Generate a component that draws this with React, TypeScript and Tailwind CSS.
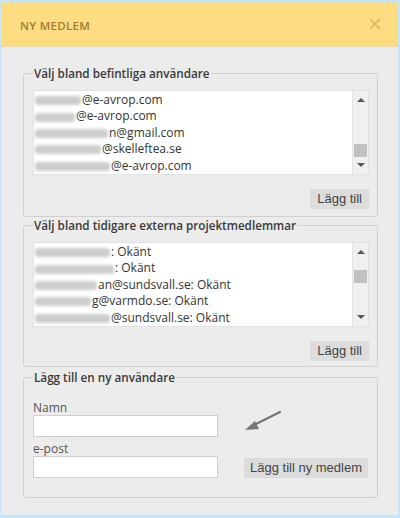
import React from "react";

const font = { fontFamily: '"Open Sans", "Noto Sans", sans-serif' };
const arial = { fontFamily: '"Liberation Sans", Arial, sans-serif' };

function Blur({ w }: { w: number }) {
  return (
    <span
      aria-hidden="true"
      className="inline-block h-[9px] mr-[1px] align-middle rounded-[3px] bg-[#cdcdcd] blur-[1.8px]"
      style={{ width: w }}
    />
  );
}

function Scrollbar({ thumbTop }: { thumbTop: number }) {
  return (
    <div className="relative w-[16px] shrink-0 bg-[#f0f0f0] border-l border-[#e4e4e4]">
      <div className="absolute left-[4px] top-[7px] w-0 h-0 border-l-[4px] border-r-[4px] border-b-[4px] border-l-transparent border-r-transparent border-b-[#555]" />
      <div
        className="absolute left-[1px] w-[13px] h-[13px] bg-[#c1c1c1]"
        style={{ top: thumbTop }}
      />
      <div className="absolute left-[4px] bottom-[7px] w-0 h-0 border-l-[4px] border-r-[4px] border-t-[4px] border-l-transparent border-r-transparent border-t-[#555]" />
    </div>
  );
}

function ListBox({
  items,
  thumbTop,
}: {
  items: { w: number; rest: string }[];
  thumbTop: number;
}) {
  return (
    <div className="flex h-[85px] bg-white border border-[#e2e2e2]">
      <div className="flex-1 pl-[1px] pt-[1px] overflow-hidden">
        {items.map((it, i) => (
          <div
            key={i}
            className="h-[16.4px] leading-[16.4px] text-[12px] text-[#333] whitespace-nowrap"
            style={font}
          >
            <Blur w={it.w} />
            {it.rest}
          </div>
        ))}
      </div>
      <Scrollbar thumbTop={thumbTop} />
    </div>
  );
}

function Btn({ children, px }: { children: React.ReactNode; px: string }) {
  return (
    <button
      className={"h-[20px] bg-[#dcdcdc] text-[13px] text-[#444] leading-[20px] " + px}
      style={arial}
    >
      {children}
    </button>
  );
}

function Fieldset({
  legend,
  children,
  className,
}: {
  legend: string;
  children: React.ReactNode;
  className?: string;
}) {
  return (
    <fieldset
      className={
        "border border-[#d0d0d0] rounded-[3px] pl-[9px] pr-[8px] " +
        (className || "")
      }
    >
      <legend
        className="px-[1px] text-[11.7px] font-semibold text-[#3a3a3a] leading-[15px]"
        style={font}
      >
        {legend}
      </legend>
      {children}
    </fieldset>
  );
}

export default function App() {
  const list1 = [
    { w: 46, rest: "@e-avrop.com" },
    { w: 40, rest: "@e-avrop.com" },
    { w: 73, rest: "n@gmail.com" },
    { w: 66, rest: "@skelleftea.se" },
    { w: 75, rest: "@e-avrop.com" },
  ];
  const list2 = [
    { w: 75, rest: ": Okänt" },
    { w: 79, rest: ": Okänt" },
    { w: 62, rest: "an@sundsvall.se: Okänt" },
    { w: 56, rest: "g@varmdo.se: Okänt" },
    { w: 75, rest: "@sundsvall.se: Okänt" },
  ];
  return (
    <div className="w-[400px] h-[518px] bg-[#c9e4f6] pt-[3px] pl-[1px]">
      <div className="w-[397px] h-[512px] flex flex-col bg-[#ececec]">
        <div className="h-[44px] shrink-0 bg-[#fedc82] flex items-center justify-between pl-[19px] pr-[17px]">
          <div
            className="text-[11.5px] font-semibold tracking-[0.3px] text-[#a07c36] pt-[2px]"
            style={font}
          >
            NY MEDLEM
          </div>
          <svg width="12" height="12" viewBox="0 0 12 12" className="mb-[3px]">
            <path
              d="M1 1 L11 11 M11 1 L1 11"
              stroke="#d4ad6a"
              strokeWidth="1.3"
            />
          </svg>
        </div>
        <div className="flex flex-col pl-[22px] pr-[20px] pt-[19px]">
          <Fieldset legend="Välj bland befintliga användare" className="pb-[7px]">
            <div className="mt-[9px]">
              <ListBox items={list1} thumbTop={53} />
            </div>
            <div className="flex justify-end mt-[14px]">
              <Btn px="px-[7px]">Lägg till</Btn>
            </div>
          </Fieldset>
          <Fieldset legend="Välj bland tidigare externa projektmedlemmar" className="mt-[1px] pb-[5px]">
            <div className="mt-[9px]">
              <ListBox items={list2} thumbTop={27} />
            </div>
            <div className="flex justify-end mt-[14px]">
              <Btn px="px-[7px]">Lägg till</Btn>
            </div>
          </Fieldset>
          <Fieldset legend="Lägg till en ny användare" className="mt-[3px] pb-[19px]">
            <div className="flex">
              <div className="flex flex-col w-[185px]">
                <div
                  className="mt-[15px] text-[12px] leading-[15px] text-[#555]"
                  style={font}
                >
                  Namn
                </div>
                <input className="mt-[0px] h-[22px] bg-white border border-[#cfcfcf] w-[185px]" />
                <div
                  className="mt-[4px] text-[12px] leading-[15px] text-[#555]"
                  style={font}
                >
                  e-post
                </div>
                <input className="mt-[0px] h-[22px] bg-white border border-[#cfcfcf] w-[185px]" />
              </div>
              <div className="flex-1 flex flex-col items-end justify-between pl-[24px] pr-[1px]">
                <svg width="40" height="24" viewBox="0 0 40 24" className="self-start mt-[24px] ml-[2px]">
                  <path d="M36 3 L8 17" stroke="#777" strokeWidth="2.2" strokeLinecap="round" />
                  <path d="M1 21 L11 12 L15 20 Z" fill="#777" />
                </svg>
                <Btn px="px-[6px]">Lägg till ny medlem</Btn>
              </div>
            </div>
          </Fieldset>
        </div>
      </div>
    </div>
  );
}
